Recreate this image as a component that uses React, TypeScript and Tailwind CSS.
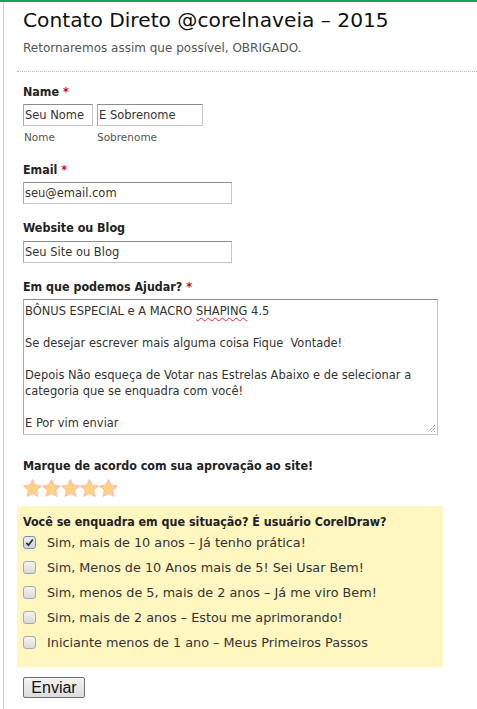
import React from 'react';

const verdana = "font-['DejaVu_Sans',sans-serif]";
const tahoma = "font-['DejaVu_Sans_Condensed','DejaVu_Sans',sans-serif] [font-stretch:condensed]";

const Req = () => <span className="text-[#e2001a]"> *</span>;

const Label = ({ children, className = '' }: { children: React.ReactNode; className?: string }) => (
  <div className={`${tahoma} text-[12.4px] font-bold leading-[16px] text-[#222] ${className}`}>{children}</div>
);

const Field = ({ value, className = '' }: { value: string; className?: string }) => (
  <div
    className={`${tahoma} h-[22px] border border-[#c6c6c6] border-t-[#8c8c8c] border-l-[#a9a9a9] bg-white pl-[1px] text-[12.75px] leading-[20px] text-[#333] ${className}`}>
    {value}
  </div>
);

const Star = () => (
  <svg width="19" height="19" viewBox="0 0 24 24">
    <polygon
      points="12,1 15.2,8 22.8,8.8 17,14 18.7,21.6 12,17.7 5.3,21.6 7,14 1.2,8.8 8.8,8"
      fill="#ffd47c"
      stroke="#fcc3a6"
      strokeWidth="1.8"
      strokeLinejoin="round"
    />
  </svg>
);

const Box = ({ checked }: { checked?: boolean }) => (
  <span
    className={`flex h-[13px] w-[13px] shrink-0 items-center justify-center rounded-[3px] border ${
      checked ? 'border-[#6f8fbf] bg-gradient-to-b from-[#e9eef6] to-[#cdd6e3]' : 'border-[#a9a9a9] bg-gradient-to-b from-[#f4f4f4] to-[#d9d9d9]'
    }`}>
    {checked && (
      <svg width="9" height="9" viewBox="0 0 9 9">
        <path d="M1.3 4.8 L3.5 7.2 L7.8 1.5" fill="none" stroke="#333" strokeWidth="1.8" />
      </svg>
    )}
  </span>
);

const options = [
  'Sim, mais de 10 anos – Já tenho prática!',
  'Sim, Menos de 10 Anos mais de 5! Sei Usar Bem!',
  'Sim, menos de 5, mais de 2 anos – Já me viro Bem!',
  'Sim, mais de 2 anos – Estou me aprimorando!',
  'Iniciante menos de 1 ano – Meus Primeiros Passos',
];

export default function App() {
  return (
    <div className="min-h-[709px] w-[477px] border-t-2 border-[#13a35d] bg-white pl-[3px]">
      <div className="flex min-h-[707px] border-l border-[#d0d0d0]">
        <div className="w-full pl-[13px]">
          <div className="pl-[6px]">
            <h1 className={`${verdana} mt-[6px] text-[20.2px] leading-[24px] text-[#111]`}>
              Contato Direto @corelnaveia – 2015
            </h1>
            <p className={`${verdana} mt-[8px] text-[12px] leading-[16px] text-[#555]`}>
              Retornaremos assim que possível, OBRIGADO.
            </p>
          </div>
          <div className="mt-[15px] border-t border-dotted border-[#bbb]" />

          <div className="pl-[6px]">
            <Label className="mt-[12px]">
              Name<Req />
            </Label>
            <div className="mt-[4px] flex gap-[4px]">
              <Field value="Seu Nome" className="w-[70px]" />
              <Field value="E Sobrenome" className="w-[106px]" />
            </div>
            <div className={`${verdana} mt-[4px] flex text-[10.5px] leading-[14px] text-[#555]`}>
              <span className="w-[74px] pl-[1px]">Nome</span>
              <span>Sobrenome</span>
            </div>

            <Label className="mt-[18px]">
              Email<Req />
            </Label>
            <Field value="seu@email.com" className="mt-[4px] w-[209px]" />

            <Label className="mt-[16px]">Website ou Blog</Label>
            <Field value="Seu Site ou Blog" className="mt-[5px] w-[209px]" />

            <Label className="mt-[16px]">
              Em que podemos Ajudar?<Req />
            </Label>
            <div
              className={`${tahoma} relative mt-[4px] h-[136px] w-[415px] border border-[#c6c6c6] border-t-[#8c8c8c] border-l-[#a9a9a9] pl-[1px] pt-[3px] text-[12.75px] leading-[16px] text-[#333]`}>
              <div>
                BÔNUS ESPECIAL e A MACRO{' '}
                <span className="underline decoration-[#e23] decoration-wavy decoration-1 underline-offset-2">SHAPING</span> 4.5
              </div>
              <div>&nbsp;</div>
              <div>Se desejar escrever mais alguma coisa Fique&nbsp; Vontade!</div>
              <div>&nbsp;</div>
              <div>Depois Não esqueça de Votar nas Estrelas Abaixo e de selecionar a</div>
              <div>categoria que se enquadra com você!</div>
              <div>&nbsp;</div>
              <div>E Por vim enviar</div>
              <svg className="absolute bottom-[1px] right-[1px]" width="9" height="9" viewBox="0 0 9 9">
                <path d="M8 1 L1 8 M8 4 L4 8 M8 7 L7 8" stroke="#666" strokeWidth="1" strokeDasharray="1 1" />
              </svg>
            </div>

            <Label className="mt-[23px]">Marque de acordo com sua aprovação ao site!</Label>
            <div className="mt-[5px] flex h-[19px]">
              <Star />
              <Star />
              <Star />
              <Star />
              <Star />
            </div>
          </div>

          <div className="mt-[8px] h-[161px] w-[426px] bg-[#fff6c0] pl-[6px] pt-[8px]">
            <Label>Você se enquadra em que situação? É usuário CorelDraw?</Label>
            {options.map((o, i) => (
              <div key={o} className="flex h-[25px] items-center gap-[11px]">
                <Box checked={i === 0} />
                <span className={`${verdana} text-[12.8px] text-[#333]`}>{o}</span>
              </div>
            ))}
          </div>

          <div className="pl-[6px]">
            <button
              className="mt-[10px] h-[21px] w-[62px] rounded-[2px] border border-[#707070] bg-gradient-to-b from-[#f3f3f3] to-[#dcdcdc] font-['Liberation_Sans',Arial,sans-serif] text-[16px] leading-[19px] text-[#111]">
              Enviar
            </button>
          </div>
        </div>
      </div>
    </div>
  );
}
